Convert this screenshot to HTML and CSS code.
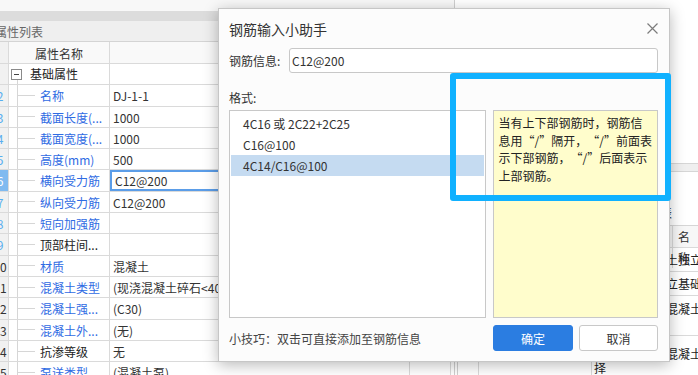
FILE: index.html
```html
<!DOCTYPE html>
<html lang="zh-CN">

<head>
    <meta charset="UTF-8">
    <title>钢筋输入小助手</title>
    <link rel="stylesheet" href="styles.css">
</head>

<body>
    <div class="app">
        <!-- 属性列表 -->
        <div class="left-panel">
            <div class="top-strip"></div>
            <div class="tab-bar"></div>
            <div class="panel-title">属性列表</div>
            <div class="prop-table">
                <div class="row head"><div class="num"></div><div class="name">属性名称</div><div class="val"></div><div class="extra"></div></div>
                <div class="row group"><div class="num"></div><div class="name"><span class="toggle"></span>基础属性</div><div class="val"></div><div class="extra"></div></div>
                <div class="row"><div class="num blue"><span>2</span></div><div class="name">名称</div><div class="val">DJ-1-1</div><div class="extra"></div></div>
                <div class="row"><div class="num blue"><span>3</span></div><div class="name">截面长度(...</div><div class="val">1000</div><div class="extra"></div></div>
                <div class="row"><div class="num blue"><span>4</span></div><div class="name">截面宽度(...</div><div class="val">1000</div><div class="extra"></div></div>
                <div class="row"><div class="num blue"><span>5</span></div><div class="name">高度(mm)</div><div class="val">500</div><div class="extra"></div></div>
                <div class="row sel"><div class="num"><span>6</span></div><div class="name">横向受力筋</div><div class="val">C12@200</div><div class="extra"></div></div>
                <div class="row"><div class="num blue"><span>7</span></div><div class="name">纵向受力筋</div><div class="val">C12@200</div><div class="extra"></div></div>
                <div class="row"><div class="num blue"><span>8</span></div><div class="name">短向加强筋</div><div class="val"></div><div class="extra"></div></div>
                <div class="row"><div class="num blue"><span>9</span></div><div class="name plain">顶部柱间...</div><div class="val"></div><div class="extra"></div></div>
                <div class="row"><div class="num"><span>10</span></div><div class="name">材质</div><div class="val">混凝土</div><div class="extra"></div></div>
                <div class="row"><div class="num"><span>11</span></div><div class="name">混凝土类型</div><div class="val">(现浇混凝土碎石&lt;40)</div><div class="extra"></div></div>
                <div class="row"><div class="num"><span>12</span></div><div class="name">混凝土强...</div><div class="val">(C30)</div><div class="extra"></div></div>
                <div class="row"><div class="num"><span>13</span></div><div class="name">混凝土外...</div><div class="val">(无)</div><div class="extra"></div></div>
                <div class="row"><div class="num"><span>14</span></div><div class="name plain">抗渗等级</div><div class="val">无</div><div class="extra"></div></div>
                <div class="row"><div class="num"><span>15</span></div><div class="name">泵送类型</div><div class="val">(混凝土泵)</div><div class="extra"></div></div>
            </div>
        </div>

        <!-- 构件列表 -->
        <div class="right-panel">
            <div class="rp-preview"></div>
            <div class="rp-split"></div>
            <div class="rp-title">构件列表</div>
            <div class="rp-table">
                <div class="rp-row rp-head"><div></div><div></div><div></div><div>名称</div></div>
                <div class="rp-row"><div></div><div></div><div class="txt"><span>现浇钢筋混凝土独立基础</span></div></div>
                <div class="rp-row"><div></div><div></div><div class="txt"><span>现浇钢筋砼独立基础</span></div></div>
                <div class="rp-row r2"><div></div><div></div><div class="txt"><span>基础垫层材质混凝土</span></div></div>
                <div class="rp-row r3"><div></div><div></div><div class="txt"><span>基础垫层材质混凝土泵送选<br>择</span></div></div>
            </div>
        </div>
    </div>

    <!-- 钢筋输入小助手 -->
    <div class="dialog">
        <div class="dlg-head">
            <span class="dlg-title">钢筋输入小助手</span>
            <svg class="dlg-close" width="11" height="11" viewBox="0 0 11 11">
                <path d="M0.5 0.5 L10.5 10.5 M10.5 0.5 L0.5 10.5" stroke="#7c7c7c" stroke-width="1.2" fill="none" />
            </svg>
        </div>
        <div class="dlg-body">
            <div class="field">
                <label for="rebarInfo">钢筋信息:</label>
                <input type="text" id="rebarInfo" class="input" value="C12@200">
            </div>
            <div class="fmt-label">格式:</div>
            <div class="fmt-row">
                <ul class="fmt-list">
                    <li>4C16 或 2C22+2C25</li>
                    <li>C16@100</li>
                    <li class="active">4C14/C16@100</li>
                </ul>
                <div class="hint">当有上下部钢筋时，钢筋信<br>息用<span class="lq">“</span>/<span class="rq">”</span>隔开，<span class="lq">“</span>/<span class="rq">”</span>前面表<br>示下部钢筋，<span class="lq">“</span>/<span class="rq">”</span>后面表示<br>上部钢筋。</div>
            </div>
            <div class="dlg-foot">
                <span class="tip">小技巧：双击可直接添加至钢筋信息</span>
                <button class="btn primary">确定</button>
                <button class="btn">取消</button>
            </div>
        </div>
    </div>

    <!-- 标注框 -->
    <div class="mark"></div>
</body>

</html>
```

FILE: styles.css
```css
* {
    box-sizing: border-box;
}

body {
    margin: 0;
    width: 698px;
    height: 375px;
    overflow: hidden;
    position: relative;
    background: #fff;
    font-family: "Noto Sans CJK SC", "Noto Sans", sans-serif;
    font-size: 12px;
    color: #333;
}

.app {
    display: flex;
    height: 375px;
}

/* 左侧属性列表 */
.left-panel {
    width: 455px;
    flex: none;
    border-right: 1px solid #cfcfcf;
    overflow: hidden;
}

.top-strip {
    height: 11px;
    background: #f8f8f8;
}

.tab-bar {
    height: 10px;
    background: #dcdcdc;
}

.panel-title {
    height: 21px;
    background: #efefef;
    border-bottom: 1px solid #d4d4d4;
    color: #666;
    font-size: 12px;
    line-height: 21px;
    text-indent: -5px;
    white-space: nowrap;
    overflow: hidden;
}

.row {
    display: grid;
    grid-template-columns: 9px 101px 300px 41px;
    height: 21.3px;
    border-bottom: 1px solid #dadada;
    line-height: 22px;
}

.row > div {
    border-right: 1px solid #dadada;
    white-space: nowrap;
    overflow: hidden;
}

.row.head {
    height: 22px;
    line-height: 23px;
    background: #f9f9f9;
}

.num {
    background: #f1f1f1;
}

.num span {
    display: block;
    width: 16px;
    margin-left: -8px;
    text-align: center;
}

.num.blue {
    color: #58aef0;
}

.name {
    padding-left: 31px;
    color: #2f6be3;
    background:
        linear-gradient(#d6d6d6, #d6d6d6) 8px 0 / 1px 100% no-repeat,
        linear-gradient(#d6d6d6, #d6d6d6) 9px 50% / 17px 1px no-repeat;
}

.name.plain {
    color: #222;
}

.head .name {
    padding-left: 0;
    text-align: center;
    color: #333;
    background: none;
}

.group .name {
    display: flex;
    align-items: center;
    padding-left: 2px;
    color: #222;
    background: linear-gradient(#d6d6d6, #d6d6d6) 8px 16px / 1px 100% no-repeat;
}

.toggle {
    width: 11px;
    height: 11px;
    border: 1px solid #8a8a8a;
    background: #fff;
    display: inline-flex;
    align-items: center;
    justify-content: center;
    margin-right: 8px;
}

.toggle::before {
    content: "";
    width: 5px;
    height: 1px;
    background: #444;
}

.val {
    padding-left: 3px;
    color: #333;
}

.row.sel .num {
    background: #80baf0;
    color: #fff;
}

.row.sel .val {
    padding-left: 5px;
    box-shadow: inset 0 0 0 2px #5b9de8;
}

/* 右侧构件列表 */
.right-panel {
    flex: 1;
    padding-left: 2px;
    overflow: hidden;
}

.rp-preview {
    height: 163px;
    background: #fff;
}

.rp-split {
    height: 9px;
    background: #efefef;
    border-top: 1px solid #d6d6d6;
    border-bottom: 1px solid #d6d6d6;
}

.rp-title {
    height: 53px;
    display: flex;
    align-items: flex-end;
    padding: 0 0 4px 167px;
    line-height: 17px;
    color: #222;
    white-space: nowrap;
}

.rp-table {
    border-left: 1px solid #d0d0d0;
    border-top: 1px solid #d6d6d6;
}

.rp-row {
    display: grid;
    grid-template-columns: 21px 113px 81px 1fr;
    height: 24px;
    border-bottom: 1px solid #dadada;
}

.rp-row > div {
    border-right: 1px solid #dadada;
}

.rp-head {
    height: 22px;
    line-height: 21px;
    background: #f7f7f7;
}

.rp-head > div:last-child {
    padding-left: 5px;
    border-right: none;
}

.rp-row .txt {
    grid-column: 3 / 5;
    border-right: none;
    padding-left: 2px;
    white-space: nowrap;
    line-height: 14px;
    display: flex;
    align-items: center;
    color: #222;
}

.rp-row.r2 {
    height: 40px;
}

.rp-row.r2 .txt {
    align-items: flex-start;
    padding-top: 6px;
}

.rp-row.r3 {
    height: 50px;
}

/* 弹窗 */
.dialog {
    position: absolute;
    left: 218px;
    top: 8px;
    width: 452px;
    height: 354px;
    background: #fcfcfc;
    border: 1px solid #c6c6c6;
    box-shadow: 0 3px 14px rgba(0, 0, 0, 0.28);
}

.dlg-head {
    height: 39px;
    display: flex;
    align-items: center;
    justify-content: space-between;
    padding: 0 11px 0 10px;
}

.dlg-title {
    font-size: 14px;
    color: #333;
}

.dlg-body {
    padding: 0 11px 0 10px;
}

.field {
    display: flex;
    align-items: center;
    height: 25px;
}

.field label {
    width: 60px;
    color: #333;
}

.input {
    flex: 1;
    height: 25px;
    border: 1px solid #c8c8c8;
    border-radius: 3px;
    padding: 0 2px;
    font-family: inherit;
    font-size: 12px;
    color: #333;
    background: #fff;
    outline: none;
}

.fmt-label {
    height: 37px;
    padding-top: 16px;
    line-height: 17px;
}

.fmt-row {
    display: flex;
    gap: 7px;
    height: 208px;
}

.fmt-list {
    width: 257px;
    margin: 0;
    padding: 2px 1px 0;
    list-style: none;
    background: #fff;
    border: 1px solid #c8c8c8;
}

.fmt-list li {
    height: 21px;
    line-height: 21px;
    padding-left: 12px;
    color: #333;
}

.fmt-list li.active {
    background: #c5dbf1;
}

.hint {
    flex: 1;
    background: #fffdcc;
    border: 1px solid #c8c8c8;
    padding: 3px 5px;
    line-height: 17.7px;
    color: #222;
    white-space: nowrap;
}

/* 全角引号：占满一个字宽 */
.hint .lq,
.hint .rq {
    display: inline-block;
    width: 12px;
}

.hint .lq {
    text-align: right;
}

.hint .rq {
    text-align: left;
}

.dlg-foot {
    display: flex;
    align-items: center;
    padding-top: 7px;
}

.tip {
    flex: 1;
    color: #444;
}

button {
    width: 80px;
    height: 26px;
    font-family: inherit;
    font-size: 12px;
    color: #333;
    background: #fff;
    border: 1px solid #c8c8c8;
    border-radius: 3px;
    cursor: pointer;
}

button + button {
    margin-left: 6px;
    width: 79px;
}

button.primary {
    background: #2b7de1;
    border-color: #2b7de1;
    color: #fff;
}

/* 标注框 */
.mark {
    position: absolute;
    left: 450px;
    top: 73px;
    width: 221px;
    height: 128px;
    border: 6px solid #10b1ff;
    border-radius: 3px;
}
```
